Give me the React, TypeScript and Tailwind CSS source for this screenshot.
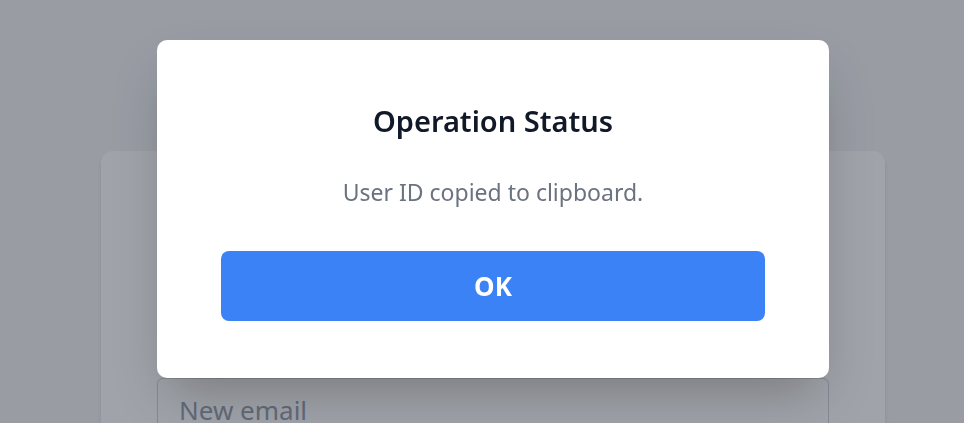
export default function App() {
  return (
    <div className="relative h-[423px] overflow-hidden bg-[#f3f4f6] font-['Noto_Sans',sans-serif]">
      <div className="flex justify-center pl-[22px] pt-[151px]">
        <div className="w-[784px] rounded-xl bg-white px-14 pt-[227px] pb-10 shadow-md">
          <input
            placeholder="New email"
            className="w-full rounded-md border border-gray-300 px-[21px] py-3 text-[26px] text-gray-800 placeholder:text-gray-400"
          />
        </div>
      </div>

      <div className="fixed inset-0 flex justify-center bg-[#111827]/40 pl-[22px] pt-10">
        <div className="h-[338px] w-[672px] rounded-[10px] bg-white px-16 pt-[63px] shadow-2xl">
          <h2 className="text-center text-[29px] font-semibold leading-9 text-[#111827]">Operation Status</h2>
          <p className="mt-[37px] text-center text-[23px] leading-8 text-[#6b7280]">User ID copied to clipboard.</p>
          <button className="mt-[43px] h-[70px] w-full rounded-lg bg-[#3b82f6] text-[26px] font-bold text-white">
            OK
          </button>
        </div>
      </div>
    </div>
  );
}
